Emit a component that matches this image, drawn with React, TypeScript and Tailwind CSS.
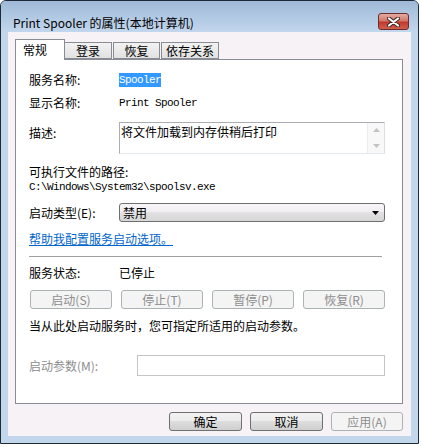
const btnOn =
  "flex items-center justify-center rounded-[3px] border border-[#707070] bg-[linear-gradient(to_bottom,#f2f2f2_0%,#ebebeb_50%,#dddddd_50%,#cfcfcf_100%)] text-[12px] leading-[16px] text-black";
const btnOff =
  "flex items-center justify-center rounded-[3px] border border-[#adb2b5] bg-[#f4f4f4] text-[12px] leading-[16px] text-[#8d8d8d]";
const mono = "font-['Liberation_Mono',monospace] text-[11px] tracking-[-0.6px]";

function CloseButton() {
  return (
    <div className="ml-auto flex h-[17px] w-[31px] items-center justify-center rounded-[3px] border border-[#6b2c2a] bg-[linear-gradient(to_bottom,#e3aba2_0%,#d4776b_45%,#c0392e_55%,#cf5f4f_100%)]">
      <svg width="13" height="10" viewBox="0 0 13 10">
        <path d="M2 1.5 L11 8.5 M11 1.5 L2 8.5" stroke="#3a2323" strokeWidth="4" strokeLinecap="round" />
        <path d="M2 1.5 L11 8.5 M11 1.5 L2 8.5" stroke="#ffffff" strokeWidth="2.2" strokeLinecap="round" />
      </svg>
    </div>
  );
}

function Row({ label, children, grey }: { label: string; children?: React.ReactNode; grey?: boolean }) {
  return (
    <div className="flex h-[16px] items-center">
      <span className={`w-[90px] text-[12px] leading-[16px] ${grey ? "text-[#8d8d8d]" : "text-black"}`}>{label}</span>
      {children}
    </div>
  );
}

export default function App() {
  return (
    <div className="h-[447px] w-[422px] bg-white font-['Noto_Sans_CJK_SC',sans-serif]">
      <div className="flex h-[444px] w-[419px] flex-col rounded-t-[6px] border border-[#1e2a38] bg-[#c2d6ec]">
        {/* title bar */}
        <div className="flex h-[31px] items-start rounded-t-[5px] bg-[linear-gradient(to_bottom,#9fb9d7_0%,#b4cbe5_60%,#c2d6ec_100%)] pl-[12px] pr-[9px] pt-[12px]">
          <span className="mt-[1px] text-[12px] leading-[17px] text-black">Print Spooler 的属性(本地计算机)</span>
          <CloseButton />
        </div>

        {/* client */}
        <div className="mx-[7px] mb-[7px] flex flex-1 flex-col bg-[#f6f2f6] pl-[7px] pr-[8px] pt-[7px]">
          {/* tabs */}
          <div className="relative z-10 -mb-[1px] flex h-[21px] items-end text-[12px] leading-[16px]">
            <div className="flex h-[21px] w-[50px] items-start border border-b-0 border-[#898c95] bg-white pl-[7px] pt-[2px]">常规</div>
            <div className="mb-[1px] flex h-[17px] w-[47px] items-center justify-center border border-l-0 border-[#898c95] bg-[linear-gradient(to_bottom,#f2f2f2,#e1e1e1)]">登录</div>
            <div className="mb-[1px] ml-[1px] flex h-[17px] w-[47px] items-center justify-center border border-[#898c95] bg-[linear-gradient(to_bottom,#f2f2f2,#e1e1e1)]">恢复</div>
            <div className="mb-[1px] ml-[1px] flex h-[17px] w-[58px] items-center justify-center border border-[#898c95] bg-[linear-gradient(to_bottom,#f2f2f2,#e1e1e1)]">依存关系</div>
          </div>

          {/* panel */}
          <div className="flex h-[345px] flex-col border border-[#898c95] bg-white pl-[13px]">
            <div className="mt-[12px]">
              <Row label="服务名称:">
                <span className={`${mono} bg-[#3399ff] leading-[14px] text-white`}>Spooler</span>
              </Row>
            </div>
            <div className="mt-[7px]">
              <Row label="显示名称:">
                <span className={`${mono} leading-[14px] text-black`}>Print Spooler</span>
              </Row>
            </div>

            <div className="mt-[11px] flex h-[32px]">
              <span className="w-[90px] pt-[3px] text-[12px] leading-[16px]">描述:</span>
              <div className="flex w-[266px] border border-[#abadb3] border-b-[#e3e9ef] border-r-[#dbdfe6]">
                <div className="flex-1 pl-[1px] pt-[1px] text-[12px] leading-[16px]">将文件加载到内存供稍后打印</div>
                <div className="flex w-[17px] flex-col items-center justify-between border-l border-[#ececec] bg-[#f8f8f8] py-[5px]">
                  <svg width="7" height="4" viewBox="0 0 7 4"><path d="M0 4 L3.5 0 L7 4 Z" fill="#c3c3c3" /></svg>
                  <svg width="7" height="4" viewBox="0 0 7 4"><path d="M0 0 L3.5 4 L7 0 Z" fill="#c3c3c3" /></svg>
                </div>
              </div>
            </div>

            <div className="mt-[10px] h-[16px] text-[12px] leading-[16px]">可执行文件的路径:</div>
            <div className={`${mono} h-[14px] leading-[14px] text-black`}>C:\Windows\System32\spoolsv.exe</div>

            <div className="mt-[9px] flex h-[19px] items-center">
              <span className="w-[90px] text-[12px] leading-[16px]">启动类型(E):</span>
              <div className="flex h-[19px] w-[266px] items-center rounded-[3px] border border-[#707070] bg-[linear-gradient(to_bottom,#f8f6f8_0%,#efedef_50%,#e3e1e3_50%,#d6d6d6_100%)] pl-[3px] pr-[5px]">
                <span className="text-[12px] leading-[16px]">禁用</span>
                <svg className="ml-auto" width="7" height="4" viewBox="0 0 7 4"><path d="M0 0 L3.5 4 L7 0 Z" fill="#000000" /></svg>
              </div>
            </div>

            <div className="mt-[9px] h-[16px] text-[12px] leading-[16px]">
              <span className="text-[#0066cc] underline">帮助我配置服务启动选项。</span>
            </div>

            <div className="mt-[9px] h-px w-[353px] bg-[#a0a0a0]" />

            <div className="mt-[8px]">
              <Row label="服务状态:">
                <span className="text-[12px] leading-[16px]">已停止</span>
              </Row>
            </div>

            <div className="ml-[1px] mt-[9px] flex h-[19px] gap-[9px]">
              <div className={`${btnOff} w-[82px]`}>启动(S)</div>
              <div className={`${btnOff} w-[82px]`}>停止(T)</div>
              <div className={`${btnOff} w-[82px]`}>暂停(P)</div>
              <div className={`${btnOff} w-[82px]`}>恢复(R)</div>
            </div>

            <div className="mt-[9px] h-[16px] text-[12px] leading-[16px]">当从此处启动服务时，您可指定所适用的启动参数。</div>

            <div className="mt-[21px] flex h-[21px] items-center">
              <span className="w-[108px] text-[12px] leading-[16px] text-[#8d8d8d]">启动参数(M):</span>
              <div className="h-[21px] w-[248px] border border-[#c2c6c9] bg-white" />
            </div>
          </div>

          {/* dialog buttons */}
          <div className="mt-[8px] flex justify-end gap-[8px]">
            <div className={`${btnOn} h-[19px] w-[73px] border-[#3c3c3c]`}>确定</div>
            <div className={`${btnOn} h-[19px] w-[73px]`}>取消</div>
            <div className={`${btnOff} h-[19px] w-[72px]`}>应用(A)</div>
          </div>
        </div>
      </div>
    </div>
  );
}
